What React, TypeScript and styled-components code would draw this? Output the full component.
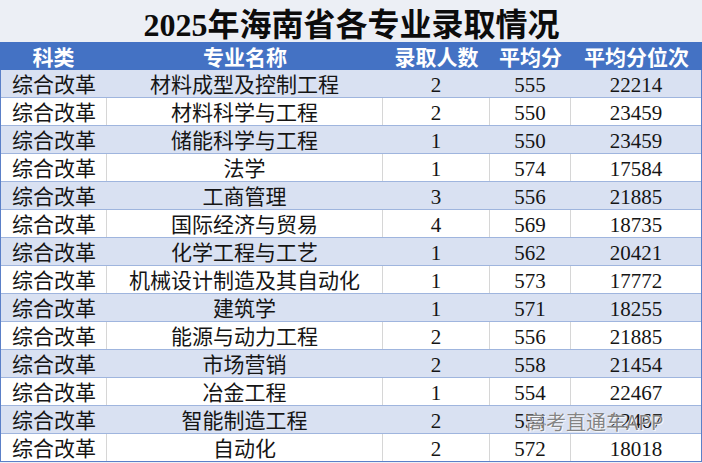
import React from "react";
import styled, { createGlobalStyle } from "styled-components";

const Global = createGlobalStyle`
  html, body { margin: 0; padding: 0; background: #ffffff; }
  body { width: 702px; height: 463px; overflow: hidden; }
`;

const COLS = "107px 276px 107px 81px 131px";

const Page = styled.div`
  position: relative;
  width: 702px;
  height: 463px;
  background: #eceff5;
  font-family: "Liberation Serif", "Noto Sans CJK SC", serif;
  color: #111;
`;

const Title = styled.div`
  height: 42px;
  display: flex;
  align-items: center;
  justify-content: center;
  font-size: 32px;
  font-weight: 600;
  color: #0c0c0c;
  padding: 2px 0 0 1px;
  box-sizing: border-box;
`;

const Table = styled.div`
  display: flex;
  flex-direction: column;
  border-left: 1px solid #5b80c8;
  border-right: 1px solid #5b80c8;
  box-sizing: border-box;
`;

const HeaderRow = styled.div`
  display: grid;
  grid-template-columns: ${COLS};
  height: 28px;
  background: #4472c4;
  color: #ffffff;
  font-family: "Noto Sans CJK SC", sans-serif;
  font-weight: 700;
  font-size: 21px;
`;

const HeaderCell = styled.div`
  display: flex;
  align-items: center;
  justify-content: center;
  line-height: 1;
  padding-top: 1px;
`;

const Row = styled.div<{ $stripe: boolean }>`
  display: grid;
  grid-template-columns: 106px 276px 107px 81px 130px;
  height: 28px;
  box-sizing: border-box;
  border-bottom: 1px solid #9fb5de;
  background: ${(p) => (p.$stripe ? "#d9e1f2" : "#ffffff")};
  font-size: 21px;
  &:last-child { border-bottom-color: #5b80c8; }
`;

const Cell = styled.div<{ $stripe: boolean; $align?: "left" | "center"; $last?: boolean }>`
  display: flex;
  align-items: center;
  justify-content: ${(p) => (p.$align === "left" ? "flex-start" : "center")};
  padding-left: ${(p) => (p.$align === "left" ? "11px" : "0")};
  padding-top: 3px;
  border-right: ${(p) => (p.$last ? "none" : `1px solid ${p.$stripe ? "#d9e1f2" : "#d6d6d6"}`)};
  line-height: 1;
  white-space: nowrap;
  overflow: hidden;
  color: #151515;
`;

const Watermark = styled.div`
  position: absolute;
  left: 526px;
  top: 409px;
  font-family: "Noto Sans CJK SC", sans-serif;
  font-size: 20px;
  line-height: 26px;
  color: rgba(110, 110, 110, 0.85);
  text-shadow: 0 0 1px #fff, 1px 1px 0 rgba(255,255,255,0.7);
  white-space: nowrap;
  pointer-events: none;
`;

const headers = ["科类", "专业名称", "录取人数", "平均分", "平均分位次"];

const rows: [string, string, string, string, string][] = [
  ["综合改革", "材料成型及控制工程", "2", "555", "22214"],
  ["综合改革", "材料科学与工程", "2", "550", "23459"],
  ["综合改革", "储能科学与工程", "1", "550", "23459"],
  ["综合改革", "法学", "1", "574", "17584"],
  ["综合改革", "工商管理", "3", "556", "21885"],
  ["综合改革", "国际经济与贸易", "4", "569", "18735"],
  ["综合改革", "化学工程与工艺", "1", "562", "20421"],
  ["综合改革", "机械设计制造及其自动化", "1", "573", "17772"],
  ["综合改革", "建筑学", "1", "571", "18255"],
  ["综合改革", "能源与动力工程", "2", "556", "21885"],
  ["综合改革", "市场营销", "2", "558", "21454"],
  ["综合改革", "冶金工程", "1", "554", "22467"],
  ["综合改革", "智能制造工程", "2", "554", "22467"],
  ["综合改革", "自动化", "2", "572", "18018"],
];

export default function App() {
  return (
    <Page>
      <Global />
      <Title>2025年海南省各专业录取情况</Title>
      <HeaderRow>
        {headers.map((h) => (
          <HeaderCell key={h}>{h}</HeaderCell>
        ))}
      </HeaderRow>
      <Table>
        {rows.map((r, i) => {
          const stripe = i % 2 === 0;
          return (
            <Row key={i} $stripe={stripe}>
              {r.map((c, j) => (
                <Cell key={j} $stripe={stripe} $align={j === 0 ? "left" : "center"} $last={j === 4}>
                  {c}
                </Cell>
              ))}
            </Row>
          );
        })}
      </Table>
      <Watermark>高考直通车APP</Watermark>
    </Page>
  );
}
